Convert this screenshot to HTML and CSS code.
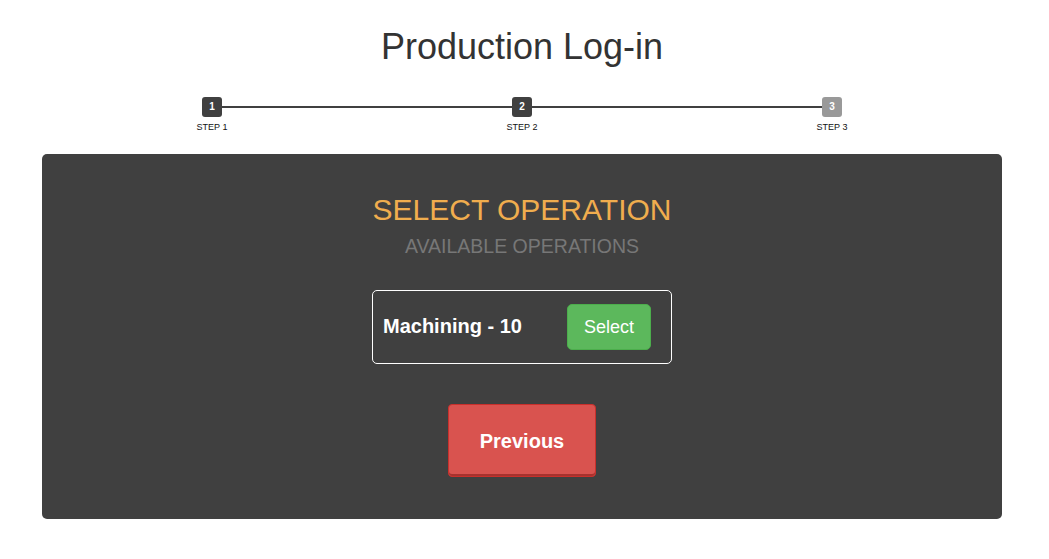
FILE: index.html
```html
<!DOCTYPE html>
<html>
<head>
<meta charset="utf-8">
<link rel="stylesheet" href="styles.css">
</head>
<body>
<div class="page">
  <h1 class="title">Production Log-in</h1>
  <div class="steps">
    <div class="step first">
      <div class="track"><span class="bar"></span><span class="dot done">1</span><span class="bar on"></span></div>
      <div class="label">STEP 1</div>
    </div>
    <div class="step">
      <div class="track"><span class="bar on"></span><span class="dot done">2</span><span class="bar on"></span></div>
      <div class="label">STEP 2</div>
    </div>
    <div class="step last">
      <div class="track"><span class="bar on"></span><span class="dot todo">3</span><span class="bar"></span></div>
      <div class="label">STEP 3</div>
    </div>
  </div>
  <div class="panel">
    <h2 class="heading">SELECT OPERATION</h2>
    <h3 class="subheading">AVAILABLE OPERATIONS</h3>
    <div class="op">
      <span class="op-name">Machining - 10</span>
      <button class="btn-select">Select</button>
    </div>
    <button class="btn-prev">Previous</button>
  </div>
</div>
</body>
</html>
```
FILE: styles.css
```css
html, body {
  margin: 0;
  padding: 0;
  background: #fff;
  font-family: "Liberation Sans", Arial, sans-serif;
}

.page {
  width: 960px;
  margin-left: 42px;
}

.title {
  margin: 27px 0 0;
  font-size: 36px;
  font-weight: 400;
  line-height: 1.1;
  text-align: center;
  color: #333;
}

.steps {
  display: grid;
  grid-template-columns: repeat(3, 1fr);
  padding: 0 15px;
  margin-top: 30.4px;
}

.step {
  display: flex;
  flex-direction: column;
  align-items: center;
}

.track {
  display: flex;
  align-items: center;
  width: 100%;
  height: 20px;
}

.bar {
  flex: 1;
  height: 2px;
}

.bar.on {
  background: #404040;
}

.dot {
  width: 20px;
  height: 20px;
  border-radius: 3px;
  display: flex;
  align-items: center;
  justify-content: center;
  font-size: 10px;
  font-weight: 700;
  color: #fff;
}

.dot.done {
  background: #404040;
}

.dot.todo {
  background: #999;
}

.label {
  margin-top: 5px;
  font-size: 9px;
  line-height: 11px;
  color: #111;
}

.panel {
  margin-top: 21px;
  background: #404040;
  border-radius: 5px;
  padding: 39px 0 42px;
  display: flex;
  flex-direction: column;
  align-items: center;
}

.heading {
  margin: 0;
  font-size: 30px;
  font-weight: 400;
  line-height: 33px;
  color: #f0ad4e;
}

.subheading {
  margin: 9px 0 0;
  font-size: 19.5px;
  font-weight: 400;
  line-height: 22px;
  color: #777;
}

.op {
  margin-top: 32.6px;
  width: 300px;
  box-sizing: border-box;
  border: 1px solid #fff;
  border-radius: 5px;
  padding: 13px 20px 13px 10px;
  display: flex;
  align-items: center;
  justify-content: space-between;
}

.op-name {
  font-size: 20px;
  font-weight: 700;
  color: #fff;
}

.btn-select {
  font-family: inherit;
  font-size: 18px;
  line-height: 24px;
  padding: 10px 16px;
  color: #fff;
  background: #5cb85c;
  border: 1px solid #4cae4c;
  border-radius: 5px;
}

.btn-prev {
  margin-top: 40px;
  width: 148px;
  height: 73px;
  font-family: inherit;
  font-size: 20px;
  font-weight: 700;
  color: #fff;
  background: #d9534f;
  border: 1px solid #c9302c;
  border-radius: 4px;
  box-shadow: inset 0 -2px 0 #a8322e;
  padding: 2px 0 0;
}
```
